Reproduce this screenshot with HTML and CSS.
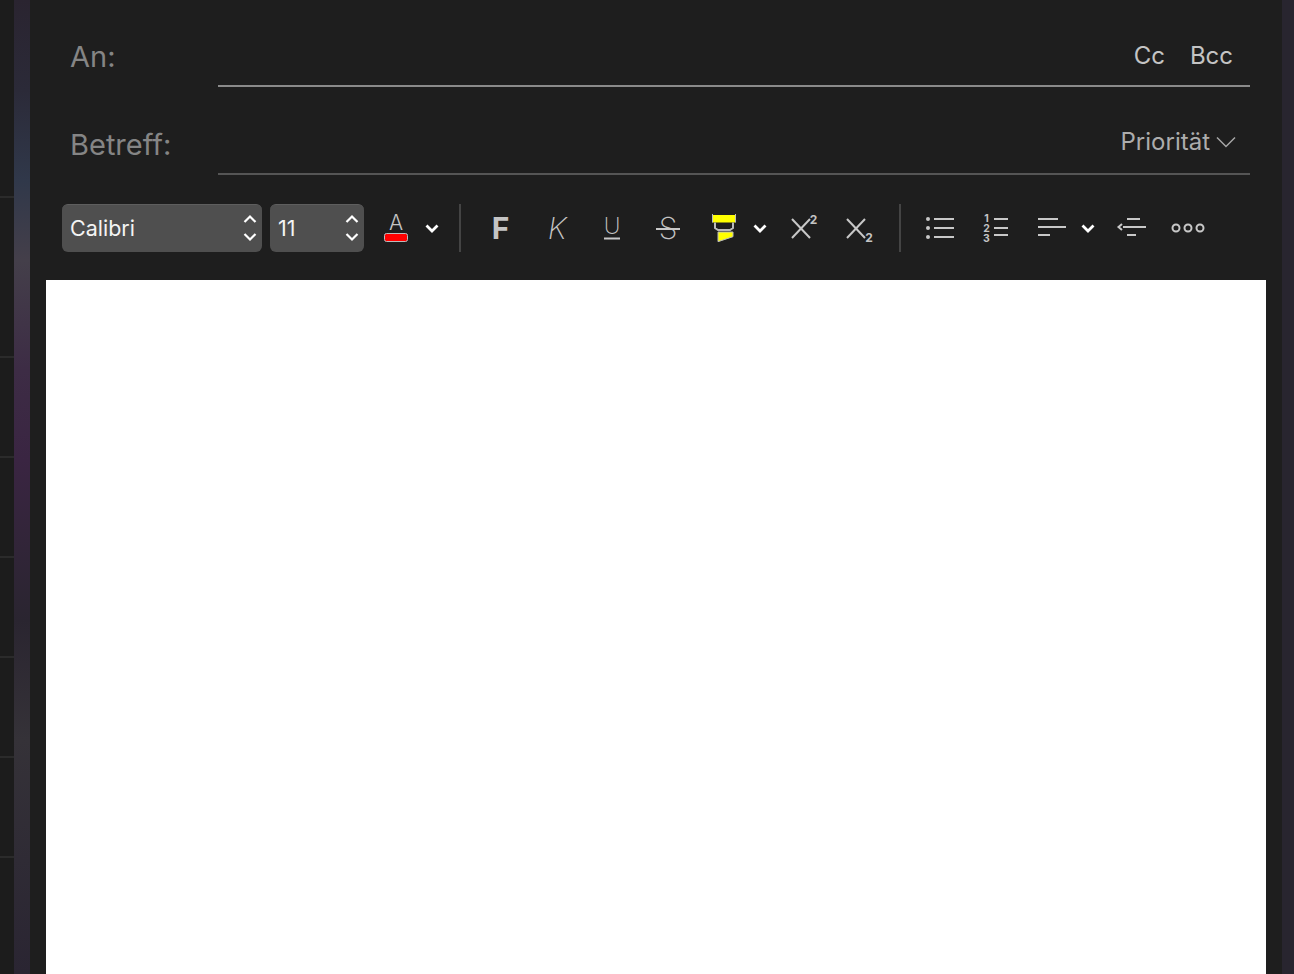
FILE: index.html
```html
<!DOCTYPE html>
<html lang="de">
<head>
  <meta charset="UTF-8">
  <title>Neue E-Mail</title>
  <meta name="viewport" content="width=device-width, initial-scale=1">
  <link rel="stylesheet" href="styles.css">
</head>
<body>

<div class="list-edge">
  <div class="edge-row edge-first"></div>
  <div class="edge-row edge-second"></div>
  <div class="edge-row"></div>
  <div class="edge-row"></div>
  <div class="edge-row"></div>
  <div class="edge-row"></div>
  <div class="edge-row"></div>
</div>
<div class="strip-left"></div>

<div class="composer">
  <div class="field field-to">
    <label class="field-label">An:</label>
    <div class="field-line">
      <span class="field-link">Cc</span>
      <span class="field-link">Bcc</span>
    </div>
  </div>

  <div class="field field-subject">
    <label class="field-label">Betreff:</label>
    <div class="field-line">
      <span class="priority">Priorität
        <svg class="priority-arrow" width="22" height="14" viewBox="0 0 22 14"><path d="M2 2.500l9 9 9-9"/></svg>
      </span>
    </div>
  </div>

  <div class="toolbar">
    <div class="picker picker-font">
      <span>Calibri</span>
      <svg class="stepper" width="16" height="30" viewBox="0 0 16 30"><path d="M2.500 9L8 3.500 13.500 9M2.500 21L8 26.500 13.500 21"/></svg>
    </div>
    <div class="picker picker-size">
      <span>11</span>
      <svg class="stepper" width="16" height="30" viewBox="0 0 16 30"><path d="M2.500 9L8 3.500 13.500 9M2.500 21L8 26.500 13.500 21"/></svg>
    </div>

    <svg class="tool tool-color" width="24" height="32" viewBox="0 0 24 32">
      <text class="icon-text light" x="12" y="18" font-size="21" text-anchor="middle">A</text>
      <rect x="0.500" y="21.500" width="23" height="8" rx="2" fill="#f00" stroke="#bbb"/>
    </svg>
    <svg class="chev chev-color" width="16" height="32" viewBox="0 0 16 32"><path d="M2.500 13.500L8 19l5.500-5.500"/></svg>

    <div class="divider divider-a"></div>

    <svg class="tool" width="32" height="32" viewBox="0 0 32 32"><text class="icon-text bold" x="16.500" y="27" font-size="30" text-anchor="middle">F</text></svg>
    <svg class="tool" width="32" height="32" viewBox="0 0 32 32"><text class="icon-text thin" x="17" y="27" font-size="30" font-style="italic" text-anchor="middle">K</text></svg>
    <svg class="tool" width="32" height="32" viewBox="0 0 32 32">
      <text class="icon-text thin" x="16" y="22" font-size="23" text-anchor="middle">U</text>
      <line class="ln" x1="8" y1="26.500" x2="24" y2="26.500"/>
    </svg>
    <svg class="tool" width="32" height="32" viewBox="0 0 32 32">
      <text class="icon-text thin" x="16" y="27" font-size="30" text-anchor="middle">S</text>
      <line class="ln" x1="4" y1="17" x2="28" y2="17"/>
    </svg>
    <svg class="tool" width="32" height="32" viewBox="0 0 32 32">
      <path d="M4.500 3v7.500h23V3" fill="#ff0"/>
      <path d="M4.500 2v8.500M27.500 2v8.500" stroke="#bbb" stroke-width="1" fill="none"/>
      <path d="M7 10.500v5.500l3 2h12l3-2v-5.500" stroke="#bbb" stroke-width="2" fill="none"/>
      <path d="M10 20h15v4.700L10 29.700z" fill="#ff0" stroke="#bbb" stroke-width="1"/>
    </svg>
    <svg class="chev" width="16" height="32" viewBox="0 0 16 32"><path d="M2.500 13.500L8 19l5.500-5.500"/></svg>
    <svg class="tool after-chev" width="32" height="32" viewBox="0 0 32 32">
      <line class="ln" x1="4" y1="7" x2="22" y2="26"/>
      <line class="ln" x1="22" y1="7" x2="4" y2="26"/>
      <text class="icon-text bold" x="25.500" y="12" font-size="12" text-anchor="middle">2</text>
    </svg>
    <svg class="tool" width="32" height="32" viewBox="0 0 32 32">
      <line class="ln" x1="3" y1="7" x2="21" y2="26"/>
      <line class="ln" x1="21" y1="7" x2="3" y2="26"/>
      <text class="icon-text bold" x="25" y="30" font-size="12" text-anchor="middle">2</text>
    </svg>

    <div class="divider divider-b"></div>

    <svg class="tool" width="32" height="32" viewBox="0 0 32 32">
      <circle cx="4" cy="7" r="2" fill="#c8c8c8"/>
      <circle cx="4" cy="16" r="2" fill="#c8c8c8"/>
      <circle cx="4" cy="25" r="2" fill="#c8c8c8"/>
      <line class="ln" x1="10" y1="7" x2="30" y2="7"/>
      <line class="ln" x1="10" y1="16" x2="30" y2="16"/>
      <line class="ln" x1="10" y1="25" x2="30" y2="25"/>
    </svg>
    <svg class="tool" width="32" height="32" viewBox="0 0 32 32">
      <text class="icon-text bold" font-size="10.500" text-anchor="middle"><tspan x="6.500" y="9.700">1</tspan><tspan x="6.500" y="19.700">2</tspan><tspan x="6.500" y="29.700">3</tspan></text>
      <line class="ln" x1="14" y1="7" x2="28" y2="7"/>
      <line class="ln" x1="14" y1="16" x2="28" y2="16"/>
      <line class="ln" x1="14" y1="23" x2="28" y2="23"/>
    </svg>
    <svg class="tool" width="32" height="32" viewBox="0 0 32 32">
      <line class="ln" x1="2" y1="7" x2="22" y2="7"/>
      <line class="ln" x1="2" y1="15" x2="30" y2="15"/>
      <line class="ln" x1="2" y1="23" x2="14" y2="23"/>
    </svg>
    <svg class="chev" width="16" height="32" viewBox="0 0 16 32"><path d="M2.500 13.500L8 19l5.500-5.500"/></svg>
    <svg class="tool after-chev" width="32" height="32" viewBox="0 0 32 32">
      <path class="ln" d="M6 12l-3.500 3 3.500 3" fill="none"/>
      <line class="ln" x1="11" y1="7" x2="24" y2="7"/>
      <line class="ln" x1="7" y1="15" x2="30" y2="15"/>
      <line class="ln" x1="11" y1="23" x2="20" y2="23"/>
    </svg>
    <svg class="tool" width="32" height="32" viewBox="0 0 32 32">
      <circle class="ln" cx="4" cy="16" r="3.500" fill="none"/>
      <circle class="ln" cx="16" cy="16" r="3.500" fill="none"/>
      <circle class="ln" cx="28" cy="16" r="3.500" fill="none"/>
    </svg>
  </div>

  <div class="editor"></div>
</div>

<div class="strip-right"></div>

</body>
</html>
```

FILE: styles.css
```css
html, body {
  height: 100%;
}
body {
  margin: 0;
  display: flex;
  height: 100vh;
  overflow: hidden;
  background-color: #1e1e1e;
  font-family: Inter, 'Liberation Sans', sans-serif;
}
.list-edge {
  width: 14px;
  flex: none;
  background-color: #1c1c1c;
}
.edge-row {
  height: 98px;
  border-bottom: 2px solid #2b2b2b;
}
.edge-first {
  height: 196px;
}
.edge-second {
  height: 158px;
}
.strip-left {
  width: 16px;
  flex: none;
  background: linear-gradient(#2a2430 0, #2b2a38 90px, #30384a 180px, #443f4a 260px, #3d2c45 370px, #3a2542 460px, #2a2530 620px, #353238 740px, #2f2b35 860px, #2a2532 974px);
}
.strip-right {
  width: 12px;
  flex: none;
  background-color: #28252f;
}
.composer {
  flex: 1;
  display: flex;
  flex-direction: column;
  min-width: 0;
}
.field {
  display: flex;
  height: 87px;
  margin: 0 32px 0 40px;
}
.field-subject {
  height: 88px;
}
.field-label {
  width: 148px;
  flex: none;
  font-size: 29px;
  font-weight: 400;
  line-height: 34px;
  color: #858585;
  padding-top: 40px;
}
.field-subject .field-label {
  padding-top: 41px;
}
.field-line {
  flex: 1;
  display: flex;
  justify-content: flex-end;
  align-items: flex-end;
  gap: 25px;
  padding: 0 17px 15px 0;
  border-bottom: 2px solid #8a8a8a;
}
.field-subject .field-line {
  border-bottom-color: #555;
  padding: 0 13px 17px 0;
}
.field-link {
  font-size: 24px;
  font-weight: 400;
  line-height: 28px;
  color: #c4c4c4;
}
.priority {
  display: flex;
  align-items: center;
  gap: 5px;
  font-size: 24px;
  font-weight: 400;
  line-height: 28px;
  color: #adadad;
}
.priority-arrow path {
  fill: none;
  stroke: #a6a6a6;
  stroke-width: 1.500;
}
.toolbar {
  display: flex;
  align-items: center;
  height: 48px;
  margin: 29px 0 28px 32px;
}
.picker {
  display: flex;
  align-items: center;
  justify-content: space-between;
  box-sizing: border-box;
  height: 48px;
  padding: 0 4px 2px 8px;
  border-radius: 6px;
  border-top: 1px solid #5e5e5e;
  background-color: #4f4f4f;
  color: #f4f4f4;
  font-size: 21.500px;
  font-weight: 400;
}
.picker-font {
  width: 200px;
}
.picker-size {
  width: 94px;
  margin-left: 8px;
}
.stepper path {
  fill: none;
  stroke: #fff;
  stroke-width: 2.200;
}
.tool {
  flex: none;
  margin-left: 24px;
  overflow: visible;
}
.tool-color {
  margin-left: 20px;
}
.after-chev {
  margin-left: 20px;
}
.chev {
  flex: none;
  margin-left: 12px;
}
.chev-color {
  margin-left: 16px;
}
.chev path {
  fill: none;
  stroke: #fff;
  stroke-width: 2.800;
}
.divider {
  width: 2px;
  height: 48px;
  flex: none;
  background-color: #444;
  margin-right: -1px;
}
.divider-a {
  margin-left: 19px;
}
.divider-b {
  margin-left: 23px;
}
.icon-text {
  fill: #c4c4c4;
  font-family: Inter, 'Liberation Sans', sans-serif;
}
.icon-text.thin {
  font-weight: 200;
}
.icon-text.light {
  font-weight: 300;
}
.icon-text.bold {
  font-weight: 700;
}
.ln {
  stroke: #c8c8c8;
  stroke-width: 2;
}
.editor {
  flex: 1;
  margin: 0 16px;
  background-color: #fff;
}
```
